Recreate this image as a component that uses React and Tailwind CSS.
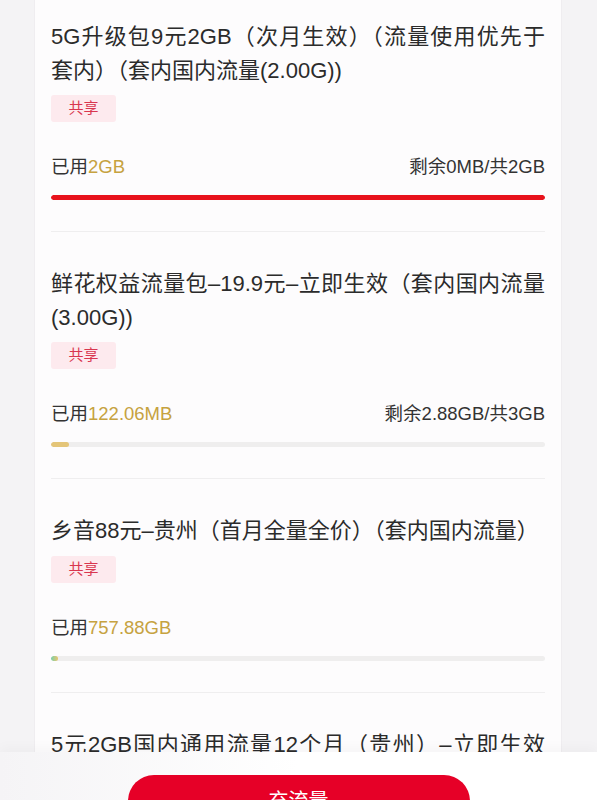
import React from "react";

/* ---------------- data ---------------- */
const packages = [
    {
        id: 1,
        // first line is broken by hand, the app wraps it one char earlier
        lines: ["5G升级包9元2GB（次月生效）（流量使用优先于", "套内）（套内国内流量(2.00G))"],
        used: "2GB",
        remain: "剩余0MB/共2GB",
        percent: 100,
        bar: "bg-[#e8121c]",
    },
    {
        id: 2,
        title: "鲜花权益流量包–19.9元–立即生效（套内国内流量(3.00G))",
        used: "122.06MB",
        remain: "剩余2.88GB/共3GB",
        percent: 3.7,
        bar: "bg-[#e4c578]",
    },
    {
        id: 3,
        title: "乡音88元–贵州（首月全量全价）（套内国内流量）",
        used: "757.88GB",
        remain: null,
        percent: 1.5,
        bar: "bg-gradient-to-r from-[#6fcfa8] to-[#e8c46a]",
    },
    {
        id: 4,
        title: "5元2GB国内通用流量12个月（贵州）–立即生效（套内国内流量(2.00G))",
        used: "0MB",
        remain: "剩余2GB/共2GB",
        percent: 0,
        bar: "bg-[#e4c578]",
    },
];

/* ---------------- presentational ---------------- */
function PackageItem({ item }) {
    return (
        <div className="pt-[35px] pb-[31px] border-b border-[#efeeef]">
            {item.lines ? (
                <div className="text-[22px] leading-[33.5px] text-[#2b2b2b]">
                    {item.lines.map((l, i) => (
                        <p key={i} className={i < item.lines.length - 1 ? "text-justify [text-align-last:justify]" : ""}>
                            {l}
                        </p>
                    ))}
                </div>
            ) : (
                <p className="text-[22px] leading-[33.5px] text-[#2b2b2b] text-justify">{item.title}</p>
            )}

            <span className="mt-[8px] inline-flex h-[27px] w-[65px] items-center justify-center rounded-[3px] bg-[#fdeaee] text-[15px] text-[#d9364f]">
                共享
            </span>

            <div className="mt-[33px] flex items-center justify-between text-[18.5px] leading-[24px] text-[#333333]">
                <span>
                    已用<span className="text-[#c6a240]">{item.used}</span>
                </span>
                {item.remain && <span>{item.remain}</span>}
            </div>

            <div className="mt-[16px] h-[5px] w-full overflow-hidden rounded-full bg-[#efeeee]">
                <div className={`h-[5px] rounded-full ${item.bar}`} style={{ width: `${item.percent}%` }} />
            </div>
        </div>
    );
}

/* ---------------- main ---------------- */
export default function App() {
    return (
        <div
            className="relative h-[800px] w-full overflow-hidden bg-[#f4f3f5]"
            style={{ fontFamily: '"Liberation Sans", "Noto Sans CJK SC", sans-serif' }}
        >
            {/* card */}
            <div className="-mt-[15px] ml-[34px] w-[528px] border-x border-[#efedf0] bg-[#fdfcfd] px-[16px]">
                {packages.map((p) => (
                    <PackageItem key={p.id} item={p} />
                ))}
            </div>

            {/* bottom bar */}
            <div className="absolute bottom-0 left-0 right-0 h-[48px] bg-gradient-to-r from-[#f5f4f6] via-white to-white shadow-[0_-4px_12px_rgba(0,0,0,0.03)]">
                <div className="flex justify-center pt-[23px]">
                    <button className="h-[52px] w-[342px] rounded-full bg-[#e60027] text-[20px] text-white">
                        充流量
                    </button>
                </div>
            </div>
        </div>
    );
}
